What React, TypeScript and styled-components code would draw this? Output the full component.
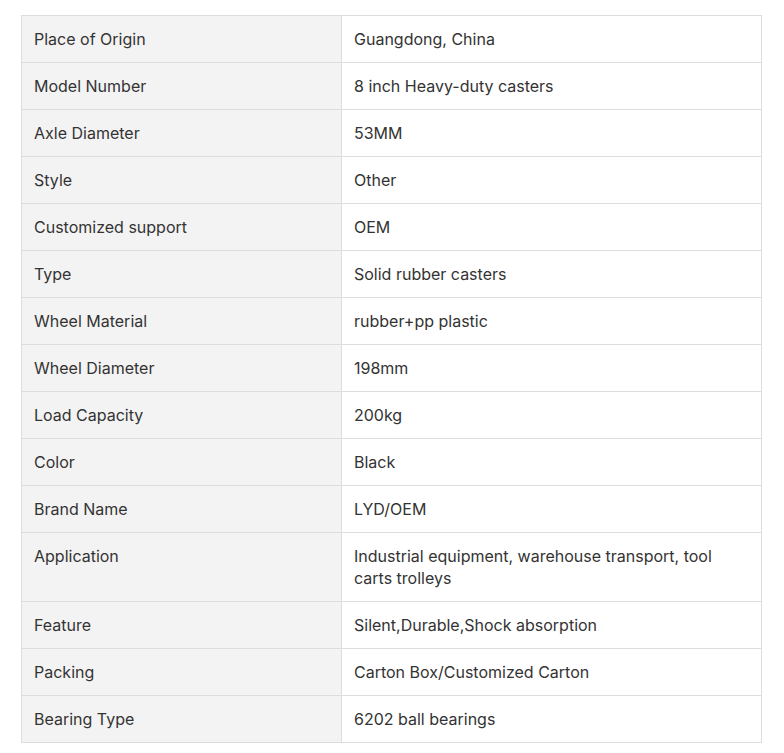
import React from "react";
import styled, { createGlobalStyle } from "styled-components";

const Global = createGlobalStyle`
  body {
    margin: 0;
    background: #ffffff;
    font-family: Inter, "Noto Sans", sans-serif;
  }
`;

const Page = styled.div`
  padding: 15px 22px 0 21px;
`;

const Table = styled.table`
  width: 741px;
  border-collapse: collapse;
  table-layout: fixed;
  font-size: 16px;
  line-height: 22px;
  color: #333333;
`;

const Label = styled.td`
  width: 295px;
  background: #f3f3f3;
  border: 1px solid #dddddd;
  padding: 12px 12px;
  vertical-align: top;
`;

const Value = styled.td`
  background: #ffffff;
  border: 1px solid #dddddd;
  padding: 12px 12px;
  vertical-align: top;
`;

const rows: [string, string][] = [
  ["Place of Origin", "Guangdong, China"],
  ["Model Number", "8 inch Heavy-duty casters"],
  ["Axle Diameter", "53MM"],
  ["Style", "Other"],
  ["Customized support", "OEM"],
  ["Type", "Solid rubber casters"],
  ["Wheel Material", "rubber+pp plastic"],
  ["Wheel Diameter", "198mm"],
  ["Load Capacity", "200kg"],
  ["Color", "Black"],
  ["Brand Name", "LYD/OEM"],
  ["Application", "Industrial equipment, warehouse transport, tool carts trolleys"],
  ["Feature", "Silent,Durable,Shock absorption"],
  ["Packing", "Carton Box/Customized Carton"],
  ["Bearing Type", "6202 ball bearings"],
];

export default function App() {
  return (
    <>
      <Global />
      <Page>
        <Table>
          <tbody>
            {rows.map(([k, v]) => (
              <tr key={k}>
                <Label>{k}</Label>
                <Value>{v}</Value>
              </tr>
            ))}
          </tbody>
        </Table>
      </Page>
    </>
  );
}
